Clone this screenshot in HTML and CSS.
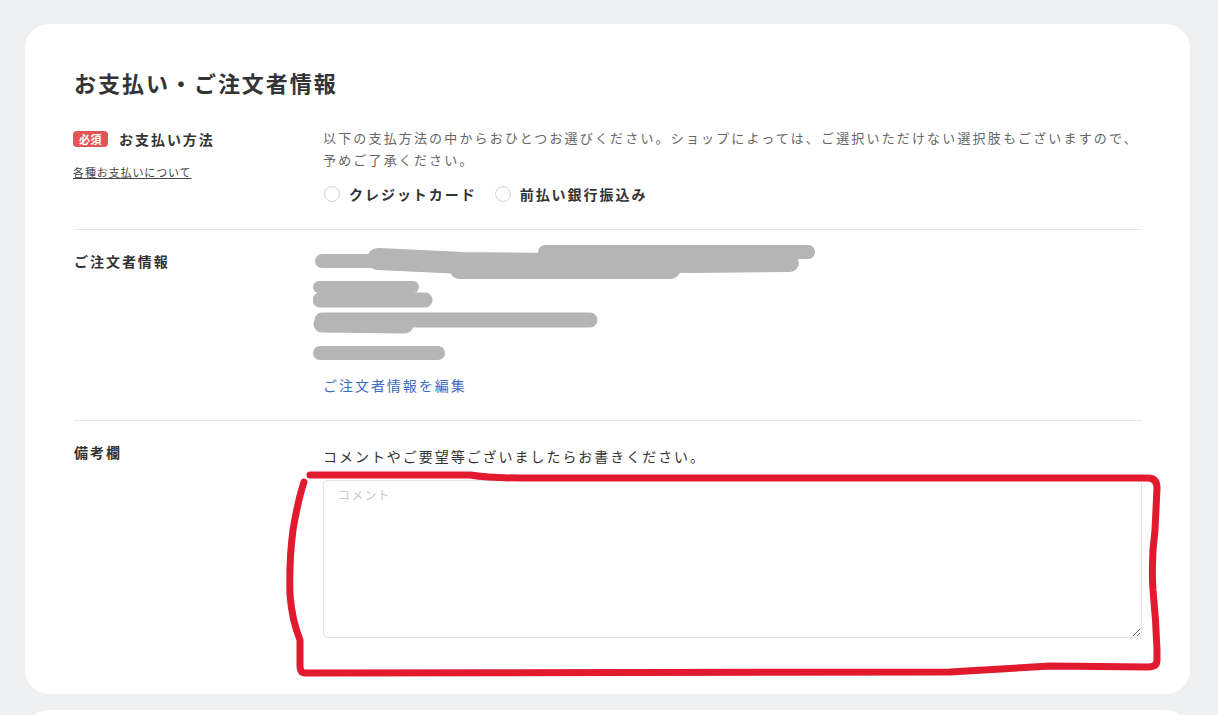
FILE: index.html
```html
<!DOCTYPE html>
<html lang="ja">
<head>
<meta charset="utf-8">
<title>お支払い・ご注文者情報</title>
<link rel="stylesheet" href="styles.css">
</head>
<body>
<div class="page">
  <section class="card">
    <h1 class="title">お支払い・ご注文者情報</h1>

    <div class="row row-pay">
      <div class="label-col">
        <div class="label-line"><span class="badge">必須</span><span class="label">お支払い方法</span></div>
        <a class="small-link" href="#">各種お支払いについて</a>
      </div>
      <div class="content-col">
        <p class="desc">以下の支払方法の中からおひとつお選びください。ショップによっては、ご選択いただけない選択肢もございますので、予めご了承ください。</p>
        <div class="radios">
          <label class="radio"><input type="radio" name="pay"><span>クレジットカード</span></label>
          <label class="radio"><input type="radio" name="pay"><span>前払い銀行振込み</span></label>
        </div>
      </div>
    </div>

    <div class="row row-orderer">
      <div class="label-col">
        <div class="label label-pad">ご注文者情報</div>
      </div>
      <div class="content-col">
        <svg class="redacted" width="510" height="120" viewBox="0 0 510 120" aria-hidden="true">
          <g stroke="#b5b5b5" stroke-linecap="round" fill="none">
            <line x1="9" y1="18" x2="67" y2="18" stroke-width="14"/>
            <polyline points="65,16 150,20 240,21" stroke-width="22"/>
            <line x1="147" y1="25" x2="357" y2="25" stroke-width="22"/>
            <line x1="232" y1="9" x2="495" y2="9" stroke-width="14"/>
            <polyline points="232,19 380,21 477,20" stroke-width="18"/>
            <line x1="6" y1="44" x2="100" y2="44" stroke-width="12"/>
            <line x1="7" y1="57" x2="112" y2="57" stroke-width="15"/>
            <line x1="9" y1="77" x2="277" y2="77" stroke-width="15"/>
            <line x1="9" y1="81" x2="92" y2="82" stroke-width="17"/>
            <line x1="7" y1="110" x2="125" y2="110" stroke-width="14"/>
          </g>
        </svg>
        <a class="edit-link" href="#">ご注文者情報を編集</a>
      </div>
    </div>

    <div class="row row-note">
      <div class="label-col">
        <div class="label label-pad">備考欄</div>
      </div>
      <div class="content-col">
        <p class="note-text">コメントやご要望等ございましたらお書きください。</p>
        <textarea class="comment" placeholder="コメント"></textarea>
      </div>
    </div>
  </section>

  <section class="card card-next"></section>

  <svg class="annotation" width="1218" height="715" viewBox="0 0 1218 715" aria-hidden="true">
    <path d="M310 475 L470 475 Q490 478 520 478 L1148 478 Q1157 478 1157 488 L1155 530 Q1151 560 1153 590 Q1156 620 1157 650 L1157 660 Q1157 667 1148 667 L1050 666 Q1020 668 950 672 L305 673 Q300 673 300 665 L300 640 Q292 620 290 595 Q289 560 293 530 Q298 500 304 482"
          fill="none" stroke="#e11a2f" stroke-width="7" stroke-linecap="round" stroke-linejoin="round"/>
  </svg>
</div>
</body>
</html>
```
FILE: styles.css
```css
* { box-sizing: border-box; }

html, body {
  margin: 0;
  padding: 0;
  background: #eeeff1;
  font-family: "Noto Sans CJK JP", "Noto Sans", sans-serif;
  color: #333;
}

.page {
  position: relative;
  padding: 24px 28px 0 25px;
  min-height: 715px;
  overflow: hidden;
}

.card {
  background: #fff;
  border-radius: 24px;
  padding: 42px 48px 56px 49px;
}

.card-next {
  margin-top: 16px;
  height: 120px;
  padding: 0;
}

.title {
  margin: 0 0 28px;
  font-size: 22px;
  line-height: 33px;
  font-weight: 700;
  letter-spacing: 0.09em;
  color: #333;
}

.row {
  display: grid;
  grid-template-columns: 249px 1fr;
  border-bottom: 1px solid #e6e6e6;
}

.row-pay { padding-bottom: 24px; }
.row-orderer { padding: 13px 0 24px; }
.row-note { padding-top: 20px; border-bottom: none; }

.label-line {
  display: flex;
  align-items: center;
  height: 24px;
}

.badge {
  display: inline-flex;
  align-items: center;
  justify-content: center;
  width: 35px;
  height: 16px;
  margin-left: -1px;
  margin-right: 11px;
  border-radius: 4px;
  background: #e05555;
  color: #fff;
  font-size: 11px;
  font-weight: 700;
  line-height: 16px;
  letter-spacing: 0.05em;
}

.label {
  font-size: 14px;
  font-weight: 700;
  line-height: 22px;
  letter-spacing: 0.14em;
  color: #333;
}

.label-pad { margin-top: 7px; }
.row-note .label-pad { margin-top: 0; }

.small-link {
  display: inline-block;
  margin-top: 12px;
  margin-left: -1px;
  font-size: 11px;
  line-height: 18px;
  letter-spacing: 0.08em;
  color: #444;
  text-decoration: underline;
}

.desc {
  margin: 0;
  font-size: 13px;
  line-height: 22px;
  letter-spacing: 0.166em;
  color: #666;
}

.radios {
  display: flex;
  align-items: center;
  gap: 17px;
  margin-top: 12px;
  height: 22px;
}

.radio {
  display: flex;
  align-items: center;
  gap: 9px;
  font-size: 14px;
  font-weight: 700;
  letter-spacing: 0.14em;
  color: #333;
}

.radio input {
  appearance: none;
  -webkit-appearance: none;
  margin: 0 0 0 1px;
  width: 16px;
  height: 16px;
  border: 1.5px solid #d4d4d4;
  border-radius: 50%;
  background: #fff;
}

.redacted {
  display: block;
  margin-left: -10px;
}

.edit-link {
  display: inline-block;
  margin-top: 11px;
  font-size: 14px;
  line-height: 22px;
  letter-spacing: 0.14em;
  color: #3a6cc2;
  text-decoration: none;
}

.note-text {
  margin: 4px 0 0;
  font-size: 14px;
  line-height: 22px;
  letter-spacing: 0.14em;
  color: #333;
}

.comment {
  display: block;
  margin-top: 13px;
  width: 100%;
  height: 158px;
  padding: 5px 14px;
  border: 1px solid #e3e3e3;
  border-radius: 4px;
  font-family: inherit;
  font-size: 12px;
  line-height: 18px;
  letter-spacing: 0.1em;
  color: #333;
  background: #fff;
}

.comment::placeholder { color: #c9c9c9; }

.annotation {
  position: absolute;
  top: 0;
  left: 0;
  pointer-events: none;
}
```
